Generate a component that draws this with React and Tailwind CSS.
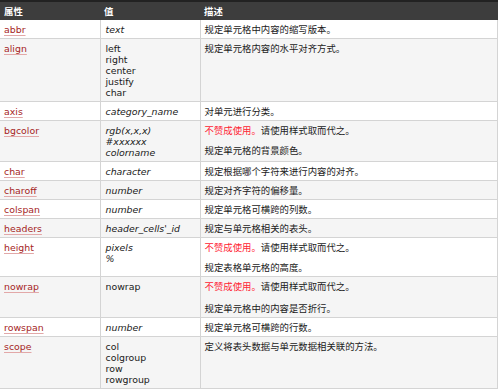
import React from 'react';

const rows = [
  { name: 'abbr', values: ['text'], italic: true, desc: ['规定单元格中内容的缩写版本。'] },
  { name: 'align', values: ['left', 'right', 'center', 'justify', 'char'], desc: ['规定单元格内容的水平对齐方式。'] },
  { name: 'axis', values: ['category_name'], italic: true, desc: ['对单元进行分类。'] },
  { name: 'bgcolor', values: ['rgb(x,x,x)', '#xxxxxx', 'colorname'], italic: true, deprecated: true, desc: ['规定单元格的背景颜色。'] },
  { name: 'char', values: ['character'], italic: true, desc: ['规定根据哪个字符来进行内容的对齐。'] },
  { name: 'charoff', values: ['number'], italic: true, desc: ['规定对齐字符的偏移量。'] },
  { name: 'colspan', values: ['number'], italic: true, desc: ['规定单元格可横跨的列数。'] },
  { name: 'headers', values: ['header_cells\'_id'], italic: true, desc: ['规定与单元格相关的表头。'] },
  { name: 'height', values: ['pixels', '%'], italic: true, deprecated: true, desc: ['规定表格单元格的高度。'] },
  { name: 'nowrap', values: ['nowrap'], deprecated: true, wide: true, desc: ['规定单元格中的内容是否折行。'] },
  { name: 'rowspan', values: ['number'], italic: true, desc: ['规定单元格可横跨的行数。'] },
  { name: 'scope', values: ['col', 'colgroup', 'row', 'rowgroup'], desc: ['定义将表头数据与单元数据相关联的方法。'] },
];

const latin = { fontFamily: '"DejaVu Sans", "Noto Sans CJK SC", sans-serif' };
const cjk = { fontFamily: '"Noto Sans CJK SC", sans-serif' };

export default function App() {
  return (
    <div className="w-[500px] h-[391px] bg-white overflow-hidden" style={latin}>
      <table className="w-[498px] border-collapse table-fixed text-[9.4px] leading-[11px] text-[#1a1a1a]">
        <colgroup>
          <col className="w-[100px]" />
          <col className="w-[100px]" />
          <col />
        </colgroup>
        <thead>
          <tr className="bg-[#3d3d3d] text-white font-bold border-t-2 border-[#222]" style={cjk}>
            <th className="text-left pl-[4px] pt-[3px] pb-[3px] h-[19px]">属性</th>
            <th className="text-left pl-[4px] pt-[3px] pb-[3px]">值</th>
            <th className="text-left pl-[4px] pt-[3px] pb-[3px]">描述</th>
          </tr>
        </thead>
        <tbody>
          {rows.map((row, i) => (
            <tr key={row.name} className={`${i % 2 ? 'bg-[#f5f5f5]' : 'bg-white'} border-b border-[#d4d4d4]`}>
              <td className="align-top pl-[4px] pr-1 pt-[4px] pb-[3px] border-r border-[#d4d4d4]">
                <span className="block text-[#a52424] underline decoration-[#e2a8a8] underline-offset-2">{row.name}</span>
              </td>
              <td className={`align-top pl-[5px] pr-1 pt-[4px] pb-[3px] border-r border-[#d4d4d4] ${row.italic ? 'italic' : ''}`}>
                {row.values.map((v) => (
                  <div key={v} className="h-[11px]">{v}</div>
                ))}
              </td>
              <td className="align-top pl-[4px] pr-1 pt-[4px] pb-[3px] border-r border-[#d4d4d4]" style={cjk}>
                {row.deprecated && (
                  <p className={`${row.wide ? 'mb-[11px]' : 'mb-[9px]'} h-[11px]`}>
                    <span className="text-[#f23]">不赞成使用。</span>请使用样式取而代之。
                  </p>
                )}
                {row.desc.map((d) => (
                  <p key={d} className="h-[11px]">{d}</p>
                ))}
              </td>
            </tr>
          ))}
        </tbody>
      </table>
    </div>
  );
}
